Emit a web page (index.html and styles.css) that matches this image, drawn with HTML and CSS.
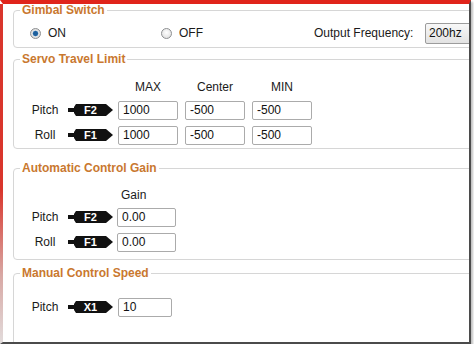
FILE: index.html
```html
<!DOCTYPE html>
<html lang="en">
<head>
    <meta charset="UTF-8">
    <title>Gimbal Settings</title>
    <link rel="stylesheet" href="styles.css">
</head>
<body>
    <div class="window">
        <fieldset class="group gimbal">
            <legend>Gimbal Switch</legend>
            <div class="switch-row">
                <label class="opt opt-on"><input type="radio" name="gimbal" checked>ON</label>
                <label class="opt opt-off"><input type="radio" name="gimbal">OFF</label>
                <span class="freq-label">Output Frequency:</span>
                <div class="combo">200hz</div>
            </div>
        </fieldset>

        <fieldset class="group servo">
            <legend>Servo Travel Limit</legend>
            <div class="head-row">
                <span class="head">MAX</span>
                <span class="head">Center</span>
                <span class="head">MIN</span>
            </div>
            <div class="row">
                <span class="axis">Pitch</span>
                <span class="pin"><span class="tag">F2</span></span>
                <input class="num" type="text" value="1000">
                <input class="num" type="text" value="-500">
                <input class="num" type="text" value="-500">
            </div>
            <div class="row">
                <span class="axis">Roll</span>
                <span class="pin"><span class="tag">F1</span></span>
                <input class="num" type="text" value="1000">
                <input class="num" type="text" value="-500">
                <input class="num" type="text" value="-500">
            </div>
        </fieldset>

        <fieldset class="group gain">
            <legend>Automatic Control Gain</legend>
            <div class="head-row">
                <span class="head head-left">Gain</span>
            </div>
            <div class="row">
                <span class="axis">Pitch</span>
                <span class="pin"><span class="tag">F2</span></span>
                <input class="num" type="text" value="0.00">
            </div>
            <div class="row">
                <span class="axis">Roll</span>
                <span class="pin"><span class="tag">F1</span></span>
                <input class="num" type="text" value="0.00">
            </div>
        </fieldset>

        <fieldset class="group manual">
            <legend>Manual Control Speed</legend>
            <div class="row">
                <span class="axis">Pitch</span>
                <span class="pin"><span class="tag">X1</span></span>
                <input class="num num-short" type="text" value="10">
            </div>
        </fieldset>
    </div>
</body>
</html>
```

FILE: styles.css
```css
body{
    margin: 0;
    background-color: #fff;
    font: 12px "Liberation Sans", Arial, sans-serif;
    color: #1a1a1a;
}
.window{
    width: 466px;
    height: 338px;
    border-top: 4px solid #e0241b;
    border-left: 3px solid #d9352c;
    border-left-color: transparent;
    border-right: 2px solid #4b4b4b;
    border-bottom: 2px solid #4b4b4b;
    box-shadow: 2px 2px 2px rgba(0, 0, 0, 0.25);
    background: linear-gradient(#d9352c, #d9352c 55%, #d8a8a4 80%, #e2dcdc) left top / 3px 100% no-repeat border-box, #fff;
    background-origin: border-box;
    background-clip: border-box;
    overflow: hidden;
}

/* group boxes */
.group{
    width: 500px;
    margin: 0 0 0 10px;
    padding: 0 0 0 8px;
    border: 1px solid #d6d6d6;
    border-radius: 4px;
    box-sizing: border-box;
    background-color: #fff;
}
.group legend{
    padding: 0 2px;
    margin-left: -2px;
    color: #c9782f;
    font-weight: bold;
    font-size: 12px;
    line-height: 13px;
}
.gimbal{
    padding-top: 5px;
    padding-bottom: 3px;
}
.servo{
    margin-top: 5px;
    padding-top: 14px;
    padding-bottom: 3px;
}
.gain{
    margin-top: 13px;
    padding-top: 13px;
    padding-bottom: 7px;
}
.manual{
    margin-top: 7px;
    padding-top: 17px;
    padding-bottom: 40px;
}

/* gimbal switch row */
.switch-row{
    display: flex;
    align-items: center;
    height: 22px;
    padding-left: 8px;
}
.opt{
    display: flex;
    align-items: center;
}
.opt-on{
    width: 131px;
}
.opt-off{
    width: 153px;
}
.opt input{
    appearance: none;
    width: 11px;
    height: 11px;
    margin: 0 7px 0 0;
    border: 1px solid #8d8f91;
    border-radius: 50%;
    background: radial-gradient(circle at 50% 40%, #ffffff, #d9d9d9);
    box-sizing: border-box;
}
.opt input:checked{
    background: radial-gradient(circle, #1d5f9c 0 2px, #5d95c8 2.6px, #e6e6e6 3.2px, #cfcfcf);
}
.freq-label{
    width: 111px;
}
.combo{
    width: 60px;
    height: 21px;
    line-height: 19px;
    padding-left: 3px;
    border: 1px solid #9c9c9c;
    border-radius: 2px;
    background: linear-gradient(#f8f8f8, #e2e2e2);
    box-sizing: border-box;
    color: #111;
}

/* value tables */
.head-row{
    display: flex;
    gap: 7px;
    height: 15px;
    line-height: 15px;
    padding-left: 96px;
    margin-bottom: 5px;
}
.gain .head-row{
    margin-bottom: 4px;
}
.head{
    width: 60px;
    text-align: center;
}
.head-left{
    text-align: left;
    padding-left: 3px;
}
.row{
    display: flex;
    align-items: center;
    height: 20px;
}
.row + .row{
    margin-top: 5px;
}
.axis{
    width: 46px;
    text-align: center;
}
.pin{
    display: flex;
    align-items: center;
    width: 45px;
    margin-right: 5px;
}
.pin::before{
    content: "";
    width: 6px;
    height: 4px;
    background-color: #111;
}
.tag{
    display: flex;
    align-items: center;
    justify-content: center;
    width: 39px;
    height: 12px;
    padding-right: 6px;
    box-sizing: border-box;
    background-color: #111;
    clip-path: polygon(2px 0, 32px 0, 39px 50%, 32px 100%, 2px 100%, 0 75%, 0 25%);
    color: #fff;
    font: bold 11px "Liberation Sans", Arial, sans-serif;
}
.num{
    width: 60px;
    height: 19px;
    margin: 0;
    padding: 0 0 0 4px;
    border: 1px solid #ababab;
    border-radius: 2px;
    box-sizing: border-box;
    font: 12px "Liberation Sans", Arial, sans-serif;
    color: #111;
}
.num + .num{
    margin-left: 7px;
}
.gain .num{
    width: 59px;
    margin-left: -1px;
}
.num-short{
    width: 54px;
}
```
